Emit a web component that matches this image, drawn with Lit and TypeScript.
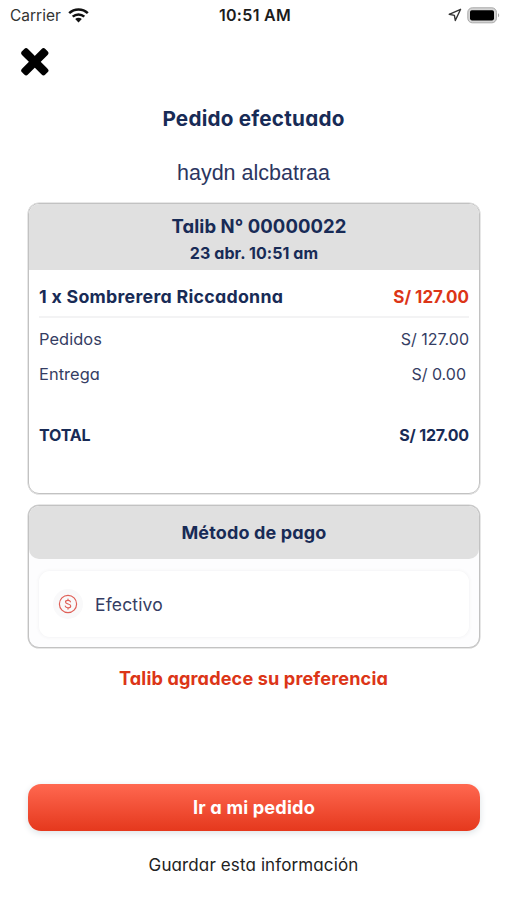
import { LitElement, html, css } from "lit";
import { customElement } from "lit/decorators.js";

@customElement("app-root")
export class AppRoot extends LitElement {
  static styles = css`
    :host {
      display: flex;
      flex-direction: column;
      box-sizing: border-box;
      width: 507px;
      height: 900px;
      overflow: hidden;
      background: #fff;
      color: #182b56;
      font-family: Inter, "Open Sans", sans-serif;
      font-feature-settings: "cv11";
      white-space: nowrap;
    }
    svg { display: block; }
    .status {
      display: grid;
      grid-template-columns: 1fr auto 1fr;
      align-items: center;
      height: 30px;
      padding: 0 7px 0 10px;
      font-feature-settings: normal;
      font-size: 15.5px;
      color: #333;
    }
    .left { display: flex; align-items: center; gap: 7px; }
    .right { display: flex; align-items: center; justify-content: flex-end; gap: 5px; }
    .time { font-weight: 600; font-size: 16px; letter-spacing: .3px; color: #1c1c1c; }
    .close { width: 28px; height: 28px; margin: 18px 0 0 21px; }
    .title { margin-top: 28px; line-height: 30px; text-align: center; font-size: 20.7px; font-weight: 700; letter-spacing: .22px; }
    .name { margin-top: 24px; line-height: 30px; text-align: center; font-family: "Liberation Sans", sans-serif; font-size: 21.5px; color: #2b3560; }
    .card { box-sizing: border-box; margin: 0 27px 0 28px; border: 1px solid #c2c2c2; border-radius: 11px; overflow: hidden; box-shadow: 0 0 0 .5px #d0d0d0; }
    .order { margin-top: 15px; height: 291px; }
    .head { background: #e0e0e0; text-align: center; font-weight: 700; }
    .order .head { height: 66px; }
    .number { padding: 8px 0 0 10px; line-height: 29px; font-size: 18.5px; letter-spacing: .07px; }
    .date { line-height: 24px; font-size: 16px; letter-spacing: .08px; }
    .rows { padding: 0 10px; }
    .row { display: flex; justify-content: space-between; align-items: center; font-size: 16px; color: #353d63; }
    .item { height: 48px; padding-top: 7px; box-sizing: border-box; border-bottom: 2px solid #f3f3f4; font-size: 17px; font-weight: 700; color: #182b56; }
    .product { font-size: 17.8px; letter-spacing: .27px; }
    .red { color: #dc3517; }
    .sub { height: 35px; }
    .sub.first { margin-top: 3px; }
    .label { font-size: 16.4px; letter-spacing: .07px; }
    .zero { margin-right: 3px; }
    .total { margin-top: 26px; height: 35px; font-weight: 700; color: #182b56; letter-spacing: -.15px; }
    .payment { margin-top: 11px; height: 143px; background: #fdfdfe; }
    .payment .head { height: 53px; line-height: 53px; border-radius: 0 0 10px 10px; font-size: 18px; letter-spacing: .15px; }
    .method { box-sizing: border-box; display: flex; align-items: center; height: 66px; margin: 12px 10px 0; padding-left: 14px; background: #fff; border-radius: 11px; box-shadow: 0 0 3px 1px #f5f5f6; font-size: 17.5px; letter-spacing: .15px; color: #353d63; }
    .coin { width: 30px; height: 30px; margin-right: 12px; }
    .thanks { margin-top: 15px; line-height: 30px; text-align: center; font-size: 18.1px; font-weight: 700; letter-spacing: .14px; color: #dc3517; }
    .button { margin: 91px 27px 0 28px; height: 47px; line-height: 47px; border-radius: 13px; text-align: center; color: #fff; font-size: 18.2px; font-weight: 700; letter-spacing: .17px; background: linear-gradient(#ff6850, #e5381d); box-shadow: 0 2px 7px #dce2e5; }
    .save { margin-top: 19px; line-height: 30px; text-align: center; font-size: 17px; letter-spacing: .12px; color: #222; }
  `;

  render() {
    return html`
      <div class="status">
        <div class="left">
          <span>Carrier</span>
          <svg width="21" height="15" viewBox="0 0 21 15" fill="none" stroke="#111" stroke-width="2.5">
            <path d="M1.2 5.2C6.4.1 14.6.1 19.8 5.2" /><path d="M4.7 8.7c3.3-3.1 8.3-3.1 11.6 0" />
            <path d="M7.2 11.1c1.9-1.7 4.7-1.7 6.6 0L10.5 14.5z" fill="#111" stroke="none" />
          </svg>
        </div>
        <span class="time">10:51 AM</span>
        <div class="right">
          <svg width="14" height="14" viewBox="0 0 14 14" fill="none" stroke="#333" stroke-width="1.4" stroke-linejoin="round"><path d="M12.6 1.3 1.2 6.3l5.2 1.1.9 5.1z" /></svg>
          <svg width="33" height="17" viewBox="0 0 33 17"><rect x=".8" y=".8" width="28.6" height="15" rx="4.5" fill="#d5d5d5" stroke="#aaa" /><rect x="3" y="3.2" width="24" height="10.2" rx="1.8" fill="#000" /><path d="M31 6.3c1.6.8 1.6 3.3 0 4z" fill="#aaa" /></svg>
        </div>
      </div>
      <svg class="close" viewBox="0 0 28 28" fill="#000"><rect x="-2.7" y="9.6" width="33" height="8.4" rx="2.6" transform="rotate(45 13.8 13.8)" /><rect x="-2.7" y="9.6" width="33" height="8.4" rx="2.6" transform="rotate(-45 13.8 13.8)" /></svg>
      <div class="title">Pedido efectuado</div>
      <div class="name">haydn alcbatraa</div>
      <section class="card order">
        <div class="head">
          <div class="number">Talib N° 00000022</div>
          <div class="date">23 abr. 10:51 am</div>
        </div>
        <div class="rows">
          <div class="row item"><span class="product">1 x Sombrerera Riccadonna</span><span class="red">S/ 127.00</span></div>
          <div class="row sub first"><span class="label">Pedidos</span><span>S/ 127.00</span></div>
          <div class="row sub"><span class="label">Entrega</span><span class="zero">S/ 0.00</span></div>
          <div class="row total"><span>TOTAL</span><span>S/ 127.00</span></div>
        </div>
      </section>
      <section class="card payment">
        <div class="head">Método de pago</div>
        <div class="method">
          <svg class="coin" viewBox="0 0 30 30" fill="none" stroke="#df6058" stroke-width="1.2" stroke-linecap="round"><circle cx="15" cy="15" r="15" fill="#f9f9fa" stroke="none" /><circle cx="15" cy="15" r="8.6" /><path d="M17.5 12.8c-.3-1-1.2-1.5-2.5-1.5-1.4 0-2.5.7-2.5 1.8 0 2.6 5.2 1.2 5.2 3.8 0 1.2-1.1 1.9-2.6 1.9s-2.5-.6-2.8-1.7M15 10v1.3M15 18.8v1.3" /></svg>
          <span>Efectivo</span>
        </div>
      </section>
      <div class="thanks">Talib agradece su preferencia</div>
      <div class="button">Ir a mi pedido</div>
      <div class="save">Guardar esta información</div>
    `;
  }
}
